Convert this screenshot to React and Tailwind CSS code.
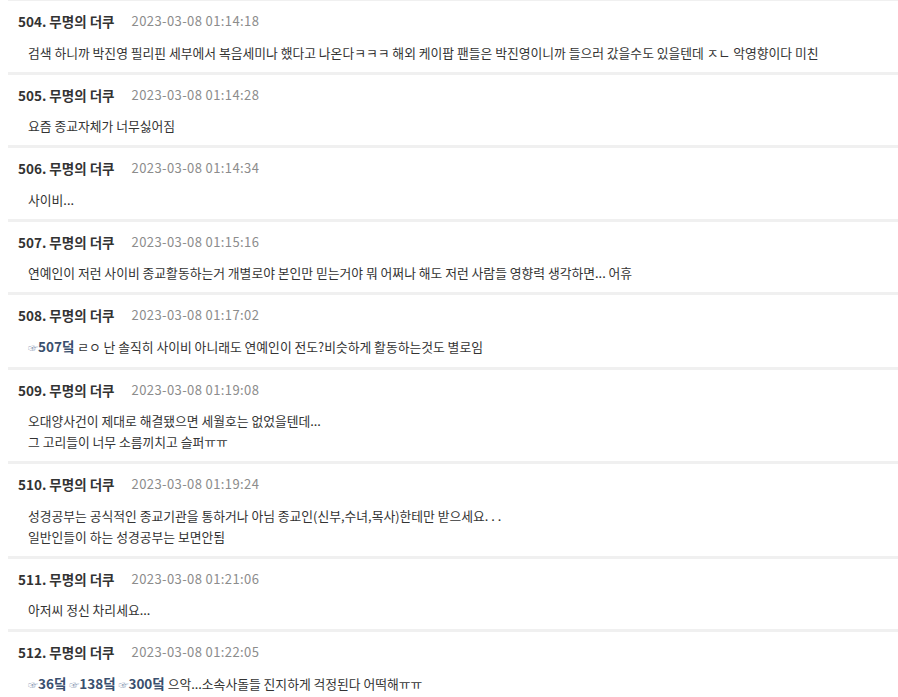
const posts = [
  { no: 504, time: '2023-03-08 01:14:18', lines: [['검색 하니까 박진영 필리핀 세부에서 복음세미나 했다고 나온다ㅋㅋㅋ 해외 케이팝 팬들은 박진영이니까 들으러 갔을수도 있을텐데 ㅈㄴ 악영향이다 미친']] },
  { no: 505, time: '2023-03-08 01:14:28', lines: [['요즘 종교자체가 너무싫어짐']] },
  { no: 506, time: '2023-03-08 01:14:34', lines: [['사이비...']] },
  { no: 507, time: '2023-03-08 01:15:16', lines: [['연예인이 저런 사이비 종교활동하는거 개별로야 본인만 믿는거야 뭐 어쩌나 해도 저런 사람들 영향력 생각하면... 어휴']] },
  { no: 508, time: '2023-03-08 01:17:02', lines: [[{ ref: 507 }, ' ㄹㅇ 난 솔직히 사이비 아니래도 연예인이 전도?비슷하게 활동하는것도 별로임']] },
  { no: 509, time: '2023-03-08 01:19:08', lines: [['오대양사건이 제대로 해결됐으면 세월호는 없었을텐데...'], ['그 고리들이 너무 소름끼치고 슬퍼ㅠㅠ']] },
  { no: 510, time: '2023-03-08 01:19:24', lines: [['성경공부는 공식적인 종교기관을 통하거나 아님 종교인(신부,수녀,목사)한테만 받으세요. . .'], ['일반인들이 하는 성경공부는 보면안됨']] },
  { no: 511, time: '2023-03-08 01:21:06', lines: [['아저씨 정신 차리세요...']] },
  { no: 512, time: '2023-03-08 01:22:05', lines: [[{ ref: 36 }, ' ', { ref: 138 }, ' ', { ref: 300 }, ' 으악...소속사돌들 진지하게 걱정된다 어떡해ㅠㅠ']] },
]

function Ref({ n }) {
  return (
    <span className="text-[13.5px] font-bold text-[#3a4f6e]">
      <span className="text-[10px] font-normal text-[#8a9ab5]">☞</span>
      {n}덬
    </span>
  )
}

function Post({ post }) {
  return (
    <div className="ml-2 border-t-[3px] border-[#f0f0f0] pt-[10px] pb-[9px]">
      <div className="flex h-5 items-center pl-[10px] text-[13px] leading-5">
        <span className="text-[13.5px] font-bold text-[#333]">{post.no}. 무명의 더쿠</span>
        <span className="ml-[17px] tracking-[0.4px] text-[#8c8c8c]">{post.time}</span>
      </div>
      <div className="mt-[10.5px] pl-5 text-[12.8px] leading-[21px] text-[#333]">
        {post.lines.map((line, i) => (
          <div key={i}>
            {line.map((part, j) =>
              typeof part === 'string' ? <span key={j}>{part}</span> : <Ref key={j} n={part.ref} />
            )}
          </div>
        ))}
      </div>
    </div>
  )
}

export default function App() {
  return (
    <div className="-mt-[2px] h-[699px] w-[898px] overflow-hidden bg-white font-['Noto_Sans_CJK_KR',sans-serif]">
      {posts.map((p) => (
        <Post key={p.no} post={p} />
      ))}
    </div>
  )
}
